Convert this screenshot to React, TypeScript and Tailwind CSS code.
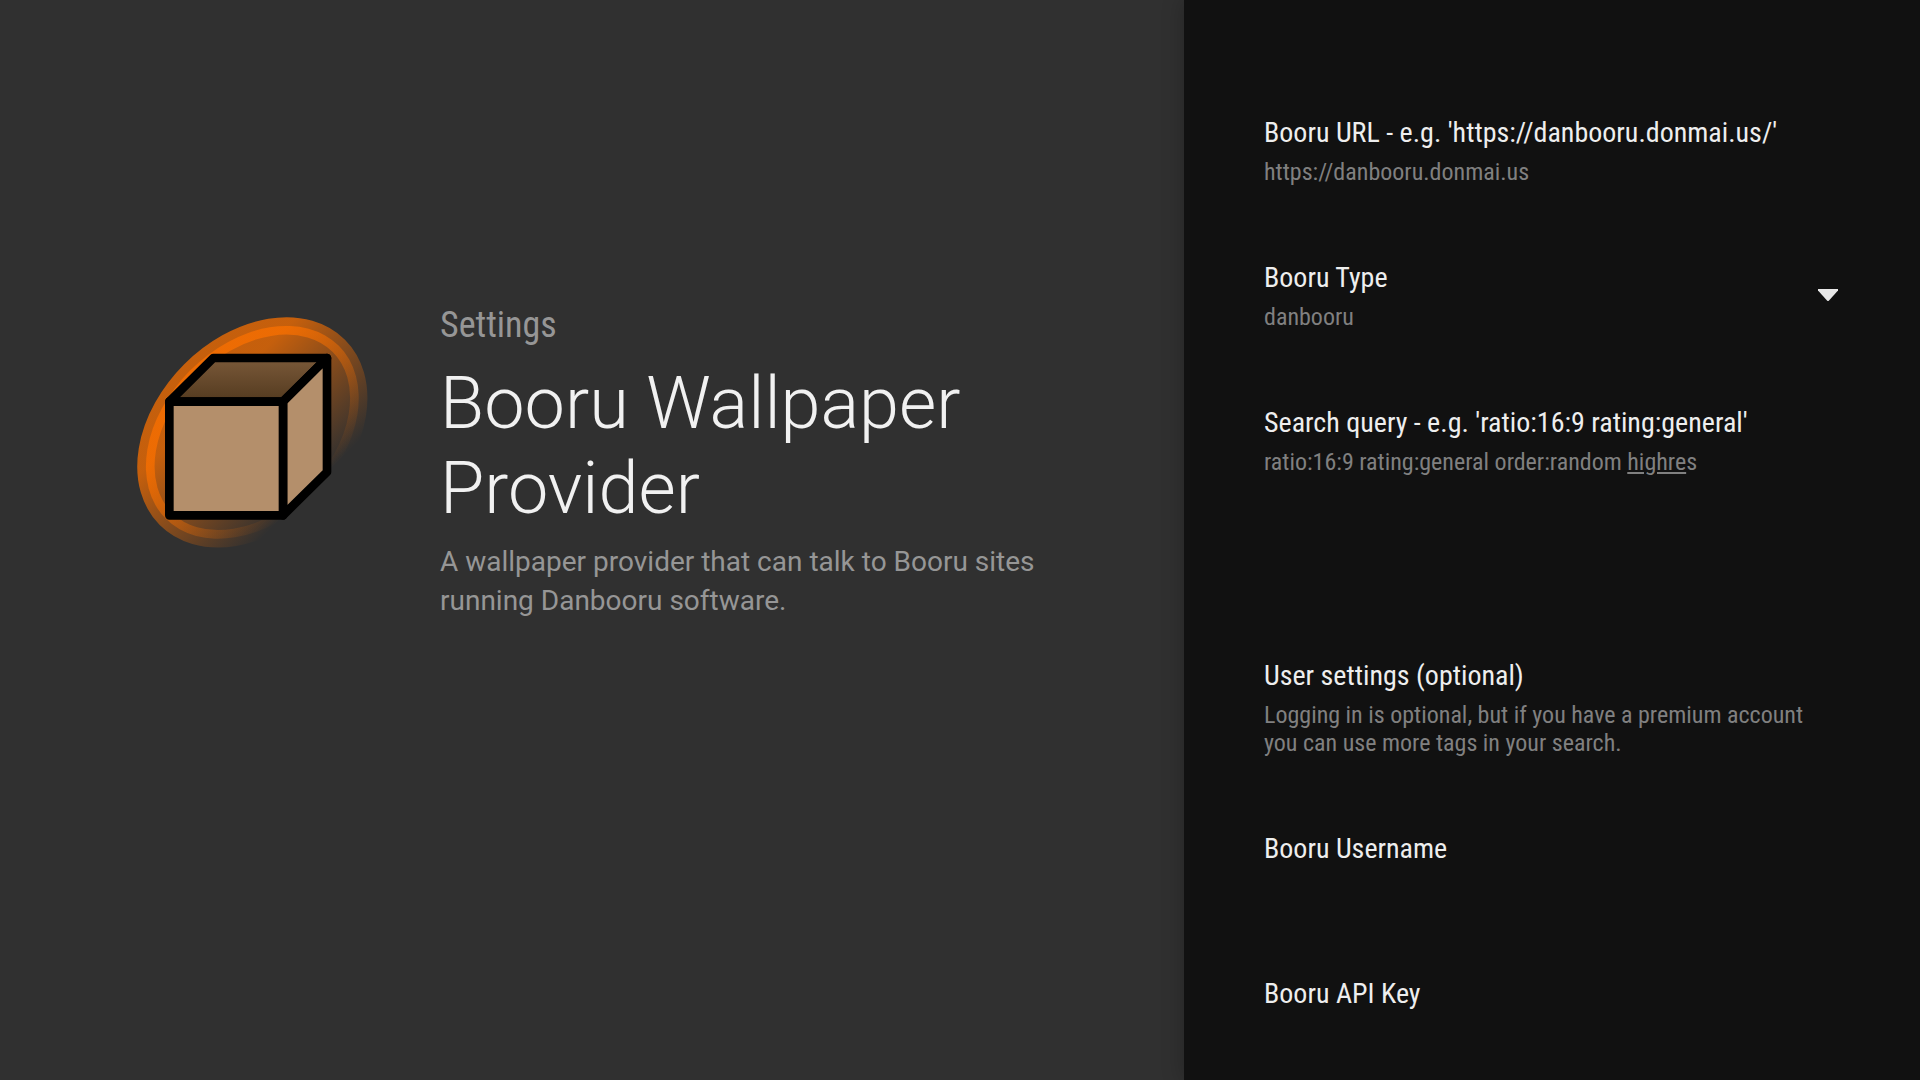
import type { ReactNode } from "react";

function BoxLogo() {
  return (
    <svg viewBox="0 0 780 780" className="size-[260px] shrink-0" role="img" aria-label="Booru Wallpaper Provider logo">
      <defs>
        <linearGradient id="glow" gradientUnits="userSpaceOnUse" x1="0" y1="-151" x2="0" y2="245">
          <stop offset="0" stopColor="#fa7000" stopOpacity="0.74" />
          <stop offset="1" stopColor="#fa7000" stopOpacity="0" />
        </linearGradient>
        <linearGradient id="lid" x1="0" y1="0" x2="0" y2="1">
          <stop offset="0" stopColor="#7a5939" />
          <stop offset="1" stopColor="#533a1f" />
        </linearGradient>
      </defs>
      <g transform="translate(397 397) rotate(-45)">
        <ellipse rx="367" ry="263" fill="url(#glow)" stroke="url(#glow)" strokeWidth="52" />
      </g>
      <g stroke="#000" strokeWidth="26" strokeLinejoin="round">
        <path d="M148 305 280 174H621L489 305Z" fill="url(#lid)" />
        <path d="M621 174V516L489 646V305Z" fill="#b48f6b" />
        <path d="M148 305H489V646H148Z" fill="#b48f6b" />
      </g>
    </svg>
  );
}

const titleStyle = "block text-[28px] leading-[33px] text-[#eeeeee]";
const summaryStyle = "mt-[9px] block text-[24px] leading-[28px] text-[#808080]";

function Preference({ title, children }: { title: string; children?: ReactNode }) {
  return (
    <li className="min-h-[70px]">
      <button type="button" className="block w-full text-left">
        <span className={titleStyle}>{title}</span>
        {children && <span className={summaryStyle}>{children}</span>}
      </button>
    </li>
  );
}

export default function App() {
  return (
    <div className="grid min-h-screen grid-cols-[1184fr_736fr] bg-[#303030] font-['Roboto',sans-serif]">
      <main className="flex items-start gap-[60px] pt-[300px] pr-[96px] pl-[120px]">
        <BoxLogo />
        <div className="pt-1">
          <p className="font-['Roboto_Condensed','Roboto',sans-serif] text-[36px] leading-[42px] text-[#969696]">Settings</p>
          <h1 className="mt-[15px] text-[72px] leading-[85px] font-light text-[#f1f1f1]">Booru Wallpaper Provider</h1>
          <p className="mt-[11px] text-[28px] leading-[39px] text-[#969696]">
            A wallpaper provider that can talk to Booru sites running Danbooru software.
          </p>
        </div>
      </main>
      <aside className="bg-[#111111] px-20 pt-[116px] font-['Roboto_Condensed','Roboto',sans-serif] shadow-[0_0_20px_rgba(0,0,0,0.25)]">
        <ul className="flex flex-col gap-[75px]">
          <Preference title="Booru URL - e.g. 'https://danbooru.donmai.us/'">https://danbooru.donmai.us</Preference>
          <li className="relative min-h-[70px]">
            <label htmlFor="booru-type" className={titleStyle}>Booru Type</label>
            <select id="booru-type" defaultValue="danbooru" className={summaryStyle + " w-full appearance-none bg-transparent"}>
              <option value="danbooru">danbooru</option>
            </select>
            <svg viewBox="0 0 20 12" className="pointer-events-none absolute top-7 right-0.5 h-3 w-5" aria-hidden="true">
              <path d="M0 0H20V1.5L11 11.5Q10 12.5 9 11.5L0 1.5Z" fill="#e8e8e8" />
            </svg>
          </li>
          <Preference title="Search query - e.g. 'ratio:16:9 rating:general'">
            ratio:16:9 rating:general order:random <u>highre</u>s
          </Preference>
        </ul>
        <section className="mt-[183px]">
          <h2 className={titleStyle}>User settings (optional)</h2>
          <p className={summaryStyle}>
            Logging in is optional, but if you have a premium account you can use more tags in your search.
          </p>
          <ul className="mt-[75px] flex flex-col gap-[75px]">
            <Preference title="Booru Username" />
            <Preference title="Booru API Key" />
          </ul>
        </section>
      </aside>
    </div>
  );
}
